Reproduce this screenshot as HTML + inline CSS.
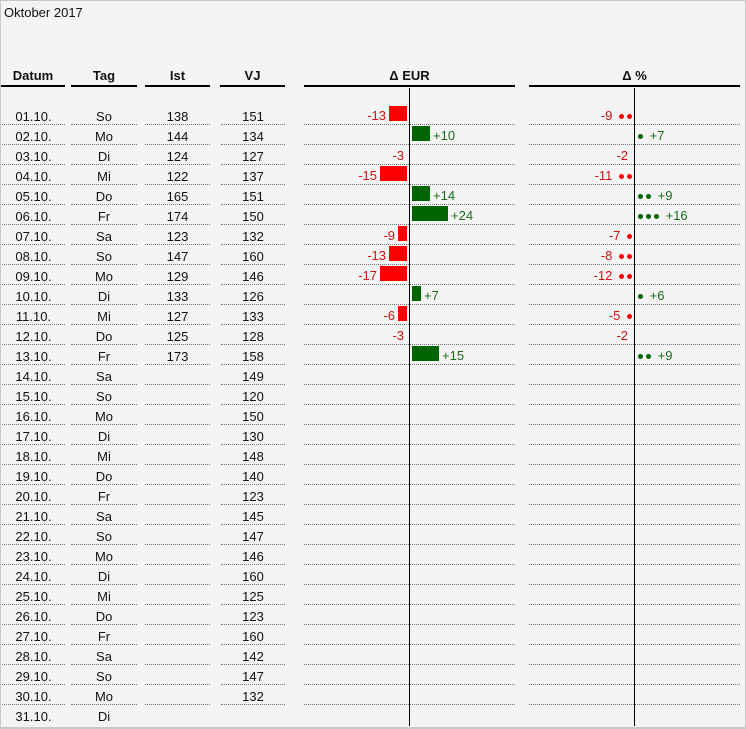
<!DOCTYPE html>
<html><head><meta charset="utf-8"><style>
*{margin:0;padding:0;box-sizing:border-box}
body{width:746px;height:729px;background:#f4f4f4;font-family:"Liberation Sans",sans-serif;font-size:13px;color:#111;position:relative;overflow:hidden}
.frame{position:absolute;left:0;top:0;width:746px;height:729px;border:1px solid #c8c8c8;border-bottom:2px solid #c8c8c8}
.title{position:absolute;left:4px;top:5px;font-size:13px}
.h{position:absolute;top:66px;height:21px;border-bottom:2px solid #000;font-weight:bold;text-align:center;line-height:20px}
.r{position:absolute;left:0;width:746px;height:20px}
.r>div{position:absolute;top:0;height:20px;border-bottom:1px dotted #777;text-align:center;line-height:19px;padding-top:2px}
.r.last>div{border-bottom:none}
.c1{left:2px;width:63px}.c2{left:71px;width:66px}.c3{left:145px;width:65px}.c4{left:221px;width:64px}.c5{left:304px;width:211px}.c6{left:529px;width:211px}
.bn,.bp{position:absolute;top:1px;height:15px}
.bn{background:#ff0000;right:108px}
.bp{background:#006400;left:108px}
.ln,.lp,.qn,.qp{position:absolute;top:0px;line-height:19px;padding-top:1px}
.ln,.qn{color:#d01010}
.lp,.qp{color:#1a6a1a}
.ax{position:absolute;top:88px;width:1px;height:638px;background:#000}
.dn,.dp{display:inline-block;width:5px;height:5px;border-radius:50%;margin-left:3px;vertical-align:1px}
.dn{background:#f00}.dp{background:#006400;margin-left:0;margin-right:3px}
</style></head><body>
<div class="frame"></div>
<div class="title">Oktober 2017</div>
<div class="h" style="left:1px;width:64px">Datum</div>
<div class="h" style="left:71px;width:66px">Tag</div>
<div class="h" style="left:145px;width:65px">Ist</div>
<div class="h" style="left:220px;width:65px">VJ</div>
<div class="h" style="left:304px;width:211px">Δ EUR</div>
<div class="h" style="left:529px;width:211px">Δ %</div>

<div class="r" style="top:105px"><div class="c1">01.10.</div><div class="c2">So</div><div class="c3">138</div><div class="c4">151</div><div class="c5"><b class="bn" style="width:18px"></b><span class="ln" style="right:129px">-13</span></div><div class="c6"><span class="qn" style="right:108px">-9 <i class="dn"></i><i class="dn"></i></span></div></div>
<div class="r" style="top:125px"><div class="c1">02.10.</div><div class="c2">Mo</div><div class="c3">144</div><div class="c4">134</div><div class="c5"><b class="bp" style="width:18px"></b><span class="lp" style="left:129px">+10</span></div><div class="c6"><span class="qp" style="left:109px"><i class="dp"></i> +7</span></div></div>
<div class="r" style="top:145px"><div class="c1">03.10.</div><div class="c2">Di</div><div class="c3">124</div><div class="c4">127</div><div class="c5"><span class="ln" style="right:111px">-3</span></div><div class="c6"><span class="qn" style="right:112px">-2</span></div></div>
<div class="r" style="top:165px"><div class="c1">04.10.</div><div class="c2">Mi</div><div class="c3">122</div><div class="c4">137</div><div class="c5"><b class="bn" style="width:27px"></b><span class="ln" style="right:138px">-15</span></div><div class="c6"><span class="qn" style="right:108px">-11 <i class="dn"></i><i class="dn"></i></span></div></div>
<div class="r" style="top:185px"><div class="c1">05.10.</div><div class="c2">Do</div><div class="c3">165</div><div class="c4">151</div><div class="c5"><b class="bp" style="width:18px"></b><span class="lp" style="left:129px">+14</span></div><div class="c6"><span class="qp" style="left:109px"><i class="dp"></i><i class="dp"></i> +9</span></div></div>
<div class="r" style="top:205px"><div class="c1">06.10.</div><div class="c2">Fr</div><div class="c3">174</div><div class="c4">150</div><div class="c5"><b class="bp" style="width:36px"></b><span class="lp" style="left:147px">+24</span></div><div class="c6"><span class="qp" style="left:109px"><i class="dp"></i><i class="dp"></i><i class="dp"></i> +16</span></div></div>
<div class="r" style="top:225px"><div class="c1">07.10.</div><div class="c2">Sa</div><div class="c3">123</div><div class="c4">132</div><div class="c5"><b class="bn" style="width:9px"></b><span class="ln" style="right:120px">-9</span></div><div class="c6"><span class="qn" style="right:108px">-7 <i class="dn"></i></span></div></div>
<div class="r" style="top:245px"><div class="c1">08.10.</div><div class="c2">So</div><div class="c3">147</div><div class="c4">160</div><div class="c5"><b class="bn" style="width:18px"></b><span class="ln" style="right:129px">-13</span></div><div class="c6"><span class="qn" style="right:108px">-8 <i class="dn"></i><i class="dn"></i></span></div></div>
<div class="r" style="top:265px"><div class="c1">09.10.</div><div class="c2">Mo</div><div class="c3">129</div><div class="c4">146</div><div class="c5"><b class="bn" style="width:27px"></b><span class="ln" style="right:138px">-17</span></div><div class="c6"><span class="qn" style="right:108px">-12 <i class="dn"></i><i class="dn"></i></span></div></div>
<div class="r" style="top:285px"><div class="c1">10.10.</div><div class="c2">Di</div><div class="c3">133</div><div class="c4">126</div><div class="c5"><b class="bp" style="width:9px"></b><span class="lp" style="left:120px">+7</span></div><div class="c6"><span class="qp" style="left:109px"><i class="dp"></i> +6</span></div></div>
<div class="r" style="top:305px"><div class="c1">11.10.</div><div class="c2">Mi</div><div class="c3">127</div><div class="c4">133</div><div class="c5"><b class="bn" style="width:9px"></b><span class="ln" style="right:120px">-6</span></div><div class="c6"><span class="qn" style="right:108px">-5 <i class="dn"></i></span></div></div>
<div class="r" style="top:325px"><div class="c1">12.10.</div><div class="c2">Do</div><div class="c3">125</div><div class="c4">128</div><div class="c5"><span class="ln" style="right:111px">-3</span></div><div class="c6"><span class="qn" style="right:112px">-2</span></div></div>
<div class="r" style="top:345px"><div class="c1">13.10.</div><div class="c2">Fr</div><div class="c3">173</div><div class="c4">158</div><div class="c5"><b class="bp" style="width:27px"></b><span class="lp" style="left:138px">+15</span></div><div class="c6"><span class="qp" style="left:109px"><i class="dp"></i><i class="dp"></i> +9</span></div></div>
<div class="r" style="top:365px"><div class="c1">14.10.</div><div class="c2">Sa</div><div class="c3"></div><div class="c4">149</div><div class="c5"></div><div class="c6"></div></div>
<div class="r" style="top:385px"><div class="c1">15.10.</div><div class="c2">So</div><div class="c3"></div><div class="c4">120</div><div class="c5"></div><div class="c6"></div></div>
<div class="r" style="top:405px"><div class="c1">16.10.</div><div class="c2">Mo</div><div class="c3"></div><div class="c4">150</div><div class="c5"></div><div class="c6"></div></div>
<div class="r" style="top:425px"><div class="c1">17.10.</div><div class="c2">Di</div><div class="c3"></div><div class="c4">130</div><div class="c5"></div><div class="c6"></div></div>
<div class="r" style="top:445px"><div class="c1">18.10.</div><div class="c2">Mi</div><div class="c3"></div><div class="c4">148</div><div class="c5"></div><div class="c6"></div></div>
<div class="r" style="top:465px"><div class="c1">19.10.</div><div class="c2">Do</div><div class="c3"></div><div class="c4">140</div><div class="c5"></div><div class="c6"></div></div>
<div class="r" style="top:485px"><div class="c1">20.10.</div><div class="c2">Fr</div><div class="c3"></div><div class="c4">123</div><div class="c5"></div><div class="c6"></div></div>
<div class="r" style="top:505px"><div class="c1">21.10.</div><div class="c2">Sa</div><div class="c3"></div><div class="c4">145</div><div class="c5"></div><div class="c6"></div></div>
<div class="r" style="top:525px"><div class="c1">22.10.</div><div class="c2">So</div><div class="c3"></div><div class="c4">147</div><div class="c5"></div><div class="c6"></div></div>
<div class="r" style="top:545px"><div class="c1">23.10.</div><div class="c2">Mo</div><div class="c3"></div><div class="c4">146</div><div class="c5"></div><div class="c6"></div></div>
<div class="r" style="top:565px"><div class="c1">24.10.</div><div class="c2">Di</div><div class="c3"></div><div class="c4">160</div><div class="c5"></div><div class="c6"></div></div>
<div class="r" style="top:585px"><div class="c1">25.10.</div><div class="c2">Mi</div><div class="c3"></div><div class="c4">125</div><div class="c5"></div><div class="c6"></div></div>
<div class="r" style="top:605px"><div class="c1">26.10.</div><div class="c2">Do</div><div class="c3"></div><div class="c4">123</div><div class="c5"></div><div class="c6"></div></div>
<div class="r" style="top:625px"><div class="c1">27.10.</div><div class="c2">Fr</div><div class="c3"></div><div class="c4">160</div><div class="c5"></div><div class="c6"></div></div>
<div class="r" style="top:645px"><div class="c1">28.10.</div><div class="c2">Sa</div><div class="c3"></div><div class="c4">142</div><div class="c5"></div><div class="c6"></div></div>
<div class="r" style="top:665px"><div class="c1">29.10.</div><div class="c2">So</div><div class="c3"></div><div class="c4">147</div><div class="c5"></div><div class="c6"></div></div>
<div class="r" style="top:685px"><div class="c1">30.10.</div><div class="c2">Mo</div><div class="c3"></div><div class="c4">132</div><div class="c5"></div><div class="c6"></div></div>
<div class="r last" style="top:705px"><div class="c1">31.10.</div><div class="c2">Di</div><div class="c3"></div><div class="c4"></div><div class="c5"></div><div class="c6"></div></div>

<div class="ax" style="left:409px"></div>
<div class="ax" style="left:634px"></div>
</body></html>
